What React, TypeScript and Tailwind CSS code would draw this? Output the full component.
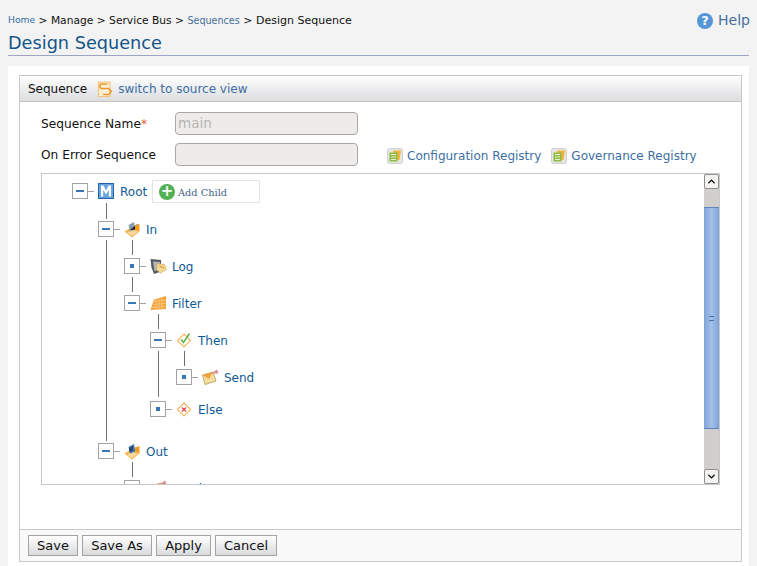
import { ChevronDown, ChevronUp } from 'lucide-react'
import type { ReactNode } from 'react'

function MIcon() {
  return (
    <svg width="16" height="16" viewBox="0 0 16 16">
      <rect x="0.5" y="0.5" width="15" height="15" fill="#68a3dc" stroke="#1f66ad" />
      <path d="M3 13.5V2.5H5.5L8 7.5L10.5 2.5H13V13.5H10.8V7L8 11.5L5.2 7V13.5Z" fill="#fff" />
    </svg>
  )
}

function InIcon({ flip }: { flip?: boolean }) {
  return (
    <svg width="17" height="17" viewBox="0 0 17 17">
      <path d="M0.5 10.5L6 7L16 10L8 16.5Z" fill="#f5b653" />
      <path d="M3 12L8 15L14 10.5L8 9Z" fill="#fbd99a" />
      <path d="M4.5 4L10 1L11.5 8.5L6 10.5Z" fill={flip ? '#3f78b5' : '#8a9bb0'} />
      <path d={flip ? 'M5 5.5L9 2.5V7.5L5.5 9Z' : 'M6 9L14 2.5L11 8.5Z'} fill={flip ? '#25466e' : '#1c1c1c'} />
      <path d="M11 4.5L15.5 3V10L11 9Z" fill="#f29c1f" />
    </svg>
  )
}

function LogIcon() {
  return (
    <svg width="17" height="17" viewBox="0 0 17 17">
      <path d="M0.5 1L11 2V13.5L4 16L1.5 9.5Z" fill="#55585d" />
      <path d="M3 3.5L10 4V11.5L4.5 13Z" fill="#b4b7bb" />
      <path d="M7 5.5L14.5 6.5L16.5 11.5L10.5 15L6.5 12Z" fill="#f5da92" stroke="#b98d3f" strokeWidth="0.5" />
      <path d="M9.5 8L14 10" stroke="#d98b2b" />
    </svg>
  )
}

function FilterIcon() {
  return (
    <svg width="17" height="16" viewBox="0 0 17 16">
      <path d="M0.5 15L4 4.5L16 1V14Z" fill="#f5a23a" />
      <path d="M2 12.5L16 11.5M3 9.5L16 8.5M4 6.5L16 5M6 4V15M9 3.5V15M12 2.5V15" stroke="#fbd08f" strokeWidth="0.7" />
    </svg>
  )
}

function DiamondIcon({ check }: { check?: boolean }) {
  return (
    <svg width="16" height="16" viewBox="0 0 16 16">
      <path d="M8 2L14.5 8.5L8 15L1.5 8.5Z" fill="#fff" stroke="#f6b35a" strokeWidth="1.1" />
      {check ? (
        <path d="M5 7.5L7.5 10.5L13.5 1.5" fill="none" stroke="#5cb04a" strokeWidth="1.5" />
      ) : (
        <path d="M6 6.5L10 10.5M10 6.5L6 10.5" stroke="#e8404a" strokeWidth="1.3" />
      )}
    </svg>
  )
}

function SendIcon() {
  return (
    <svg width="17" height="16" viewBox="0 0 17 16">
      <path d="M0.5 6L11 3L14 12L3 15.5Z" fill="#f3dd9f" stroke="#a98c50" strokeWidth="0.7" />
      <path d="M0.5 6L11 3L7 10Z" fill="#f0a23c" />
      <path d="M9.5 4.5L15 0.5L16.5 4.5Z" fill="#d98b93" />
    </svg>
  )
}

function RegistryIcon() {
  return (
    <svg width="16" height="16" viewBox="0 0 16 16" className="shrink-0">
      <rect x="0.5" y="0.5" width="15" height="15" rx="2" fill="#e5e5e3" stroke="#d0d0ce" />
      <path d="M6 2.5H14L12.5 12H7Z" fill="#f1b53d" />
      <rect x="2.5" y="4.5" width="8" height="9" fill="#8dbb45" />
      <path d="M4 6.5H9M4 9H9M4 11.5H9" stroke="#e8f2cf" />
    </svg>
  )
}

function SourceIcon() {
  return (
    <svg width="16" height="17" viewBox="0 0 16 17" className="shrink-0">
      <path d="M1.5 1H13V15.5H1.5Z" fill="#fdf0d8" stroke="#f5c27e" strokeWidth="1.2" />
      <path d="M10.5 3H4L2.5 5L4 7.5H11.5L14.5 10.5L11.5 13.5H6" fill="none" stroke="#ef972a" strokeWidth="1.5" />
    </svg>
  )
}

const nodes: { x: number; y: number; open: boolean; icon: ReactNode; label: string }[] = [
  { x: 30, y: 9, open: true, icon: <MIcon />, label: 'Root' },
  { x: 56, y: 47, open: true, icon: <InIcon />, label: 'In' },
  { x: 82, y: 84, open: false, icon: <LogIcon />, label: 'Log' },
  { x: 82, y: 121, open: true, icon: <FilterIcon />, label: 'Filter' },
  { x: 108, y: 158, open: true, icon: <DiamondIcon check />, label: 'Then' },
  { x: 134, y: 195, open: false, icon: <SendIcon />, label: 'Send' },
  { x: 108, y: 227, open: false, icon: <DiamondIcon />, label: 'Else' },
  { x: 56, y: 269, open: true, icon: <InIcon flip />, label: 'Out' },
  { x: 82, y: 306, open: false, icon: <SendIcon />, label: 'Send' },
]

const lines = [
  { x: 64, y: 29, h: 16 },
  { x: 64, y: 66, h: 201 },
  { x: 90, y: 66, h: 15 },
  { x: 90, y: 103, h: 15 },
  { x: 116, y: 140, h: 15 },
  { x: 142, y: 177, h: 15 },
  { x: 116, y: 177, h: 46 },
  { x: 90, y: 288, h: 15 },
]

const buttons = [
  { label: 'Save', width: 'w-[50px]' },
  { label: 'Save As', width: 'w-[70px]' },
  { label: 'Apply', width: 'w-[55px]' },
  { label: 'Cancel', width: 'w-[62px]' },
]

function TreeNode({ x, y, open, icon, label }: (typeof nodes)[number]) {
  return (
    <div className="absolute flex h-4 items-center" style={{ left: x, top: y }}>
      <span className="flex size-4 items-center justify-center border border-[#a3a3a3] bg-white">
        <span className={open ? 'h-[2px] w-2 bg-[#3a76b8]' : 'size-[4px] bg-[#3a76b8]'} />
      </span>
      <span className="mr-1 h-px w-[6px] bg-[#a3a3a3]" />
      <span className="w-4">{icon}</span>
      <span className="ml-[6px] pt-[2px] text-xs text-[#0f5a94]">{label}</span>
    </div>
  )
}

function Scrollbar() {
  return (
    <div className="flex w-[15px] shrink-0 flex-col bg-[#d1cfcd]">
      <div className="flex h-[15px] items-center justify-center rounded-[2px] border border-[#8f8f8f] bg-[#f4f3f2]">
        <ChevronUp size={11} strokeWidth={3} className="text-black" />
      </div>
      <div className="mt-[18px] flex h-[222px] items-center justify-center border-y border-[#5f84bb] bg-gradient-to-r from-[#7ea4d8] via-[#a3c0e6] to-[#7ea4d8]">
        <div className="h-[5px] w-[5px] border-y border-[#4c6f9f]" />
      </div>
      <div className="flex-1" />
      <div className="flex h-[15px] items-center justify-center rounded-[2px] border border-[#8f8f8f] bg-[#f4f3f2]">
        <ChevronDown size={11} strokeWidth={3} className="text-black" />
      </div>
    </div>
  )
}

export default function App() {
  return (
    <div className="h-[566px] w-[757px] overflow-hidden bg-[#f3f3f3] font-['DejaVu_Sans',sans-serif] text-[#111]">
      <div className="mx-2 flex h-[56px] justify-between border-b border-[#9ca6c4]">
        <div>
          <div className="mt-[14px] flex items-baseline whitespace-pre text-[10.7px] leading-[14px]">
            <a href="#" className="-translate-y-px text-[9.2px] text-[#2f6ca3]">Home</a>
            <span> &gt; Manage &gt; Service Bus &gt; </span>
            <a href="#" className="text-[9.6px] text-[#47709c]">Sequences</a>
            <span className="text-[11px]"> &gt; Design Sequence</span>
          </div>
          <h1 className="mt-[3px] text-[17.7px] leading-[24px] text-[#14558a]">Design Sequence</h1>
        </div>
        <a href="#" className="-mr-px mt-[12px] flex h-[17px] items-center gap-[5px] text-[14px] text-[#46709f]">
          <span className="flex size-4 items-center justify-center rounded-full bg-[#5596d6] text-[13px] font-bold text-white">?</span>
          Help
        </a>
      </div>

      <div className="ml-2 mr-2 mt-[10px] h-[500px] bg-white px-[11px] pt-[9px]">
        <div className="flex h-[487px] w-[723px] flex-col border border-[#c8c8c8]">
          <div className="flex h-[26px] shrink-0 items-center border-b border-[#c4c4c4] bg-gradient-to-b from-white to-[#dcdddf] pl-2 text-xs">
            <span>Sequence</span>
            <span className="ml-[10px] mt-px flex items-center gap-[5px] text-[#3d6ea3]">
              <SourceIcon />
              switch to source view
            </span>
          </div>

          <div className="flex-1 bg-white pl-[21px]">
            <div className="mt-[10px] flex h-[23px] items-center text-[12.2px]">
              <label className="w-[134px] pt-px">
                Sequence Name<span className="text-[#f0603c]">*</span>
              </label>
              <input
                disabled
                value="main"
                className="h-[23px] w-[183px] rounded border border-[#aaa7a3] bg-[#edeceb] px-[2px] pb-px text-[13.5px] text-[#b7b4b1]"
              />
            </div>
            <div className="mt-[8px] flex h-[23px] items-center text-xs">
              <label className="w-[134px] pt-px text-[12.2px]">On Error Sequence</label>
              <input disabled className="h-[23px] w-[183px] rounded border border-[#aaa7a3] bg-[#edeceb]" />
              <a href="#" className="ml-[29px] mt-[2px] flex items-center gap-1 text-[#3d6ea3]">
                <RegistryIcon />
                Configuration Registry
              </a>
              <a href="#" className="ml-[10px] mt-[2px] flex items-center gap-1 text-[#3d6ea3]">
                <RegistryIcon />
                Governance Registry
              </a>
            </div>

            <div className="mt-[7px] flex h-[312px] w-[679px] border border-[#c8c8c8]">
              <div className="relative flex-1 overflow-hidden">
                {lines.map((l) => (
                  <span
                    key={`${l.x}-${l.y}`}
                    className="absolute w-px bg-[#6f6f6f]"
                    style={{ left: l.x, top: l.y, height: l.h }}
                  />
                ))}
                {nodes.map((n) => (
                  <TreeNode key={`${n.label}-${n.y}`} {...n} />
                ))}
                <div className="absolute left-[110px] top-[6px] flex h-[23px] w-[108px] items-center border border-[#e4e4e4] bg-white pl-[6px]">
                  <span className="flex size-4 items-center justify-center rounded-full bg-[#52b153] text-[15px] font-bold leading-none text-white">+</span>
                  <span className="ml-[3px] pt-[3px] font-['DejaVu_Serif',serif] text-[9.8px] text-[#3f5f86]">Add Child</span>
                </div>
              </div>
              <Scrollbar />
            </div>
          </div>

          <div className="flex h-[32px] shrink-0 items-start gap-1 border-t border-[#c8c8c8] bg-[#f9f9f9] pl-2 pt-[5px]">
            {buttons.map((b) => (
              <button
                key={b.label}
                className={`${b.width} h-[21px] border border-[#a4a4a4] bg-gradient-to-b from-white to-[#d9dadc] text-[13px] leading-none text-[#111]`}
              >
                {b.label}
              </button>
            ))}
          </div>
        </div>
      </div>
    </div>
  )
}
